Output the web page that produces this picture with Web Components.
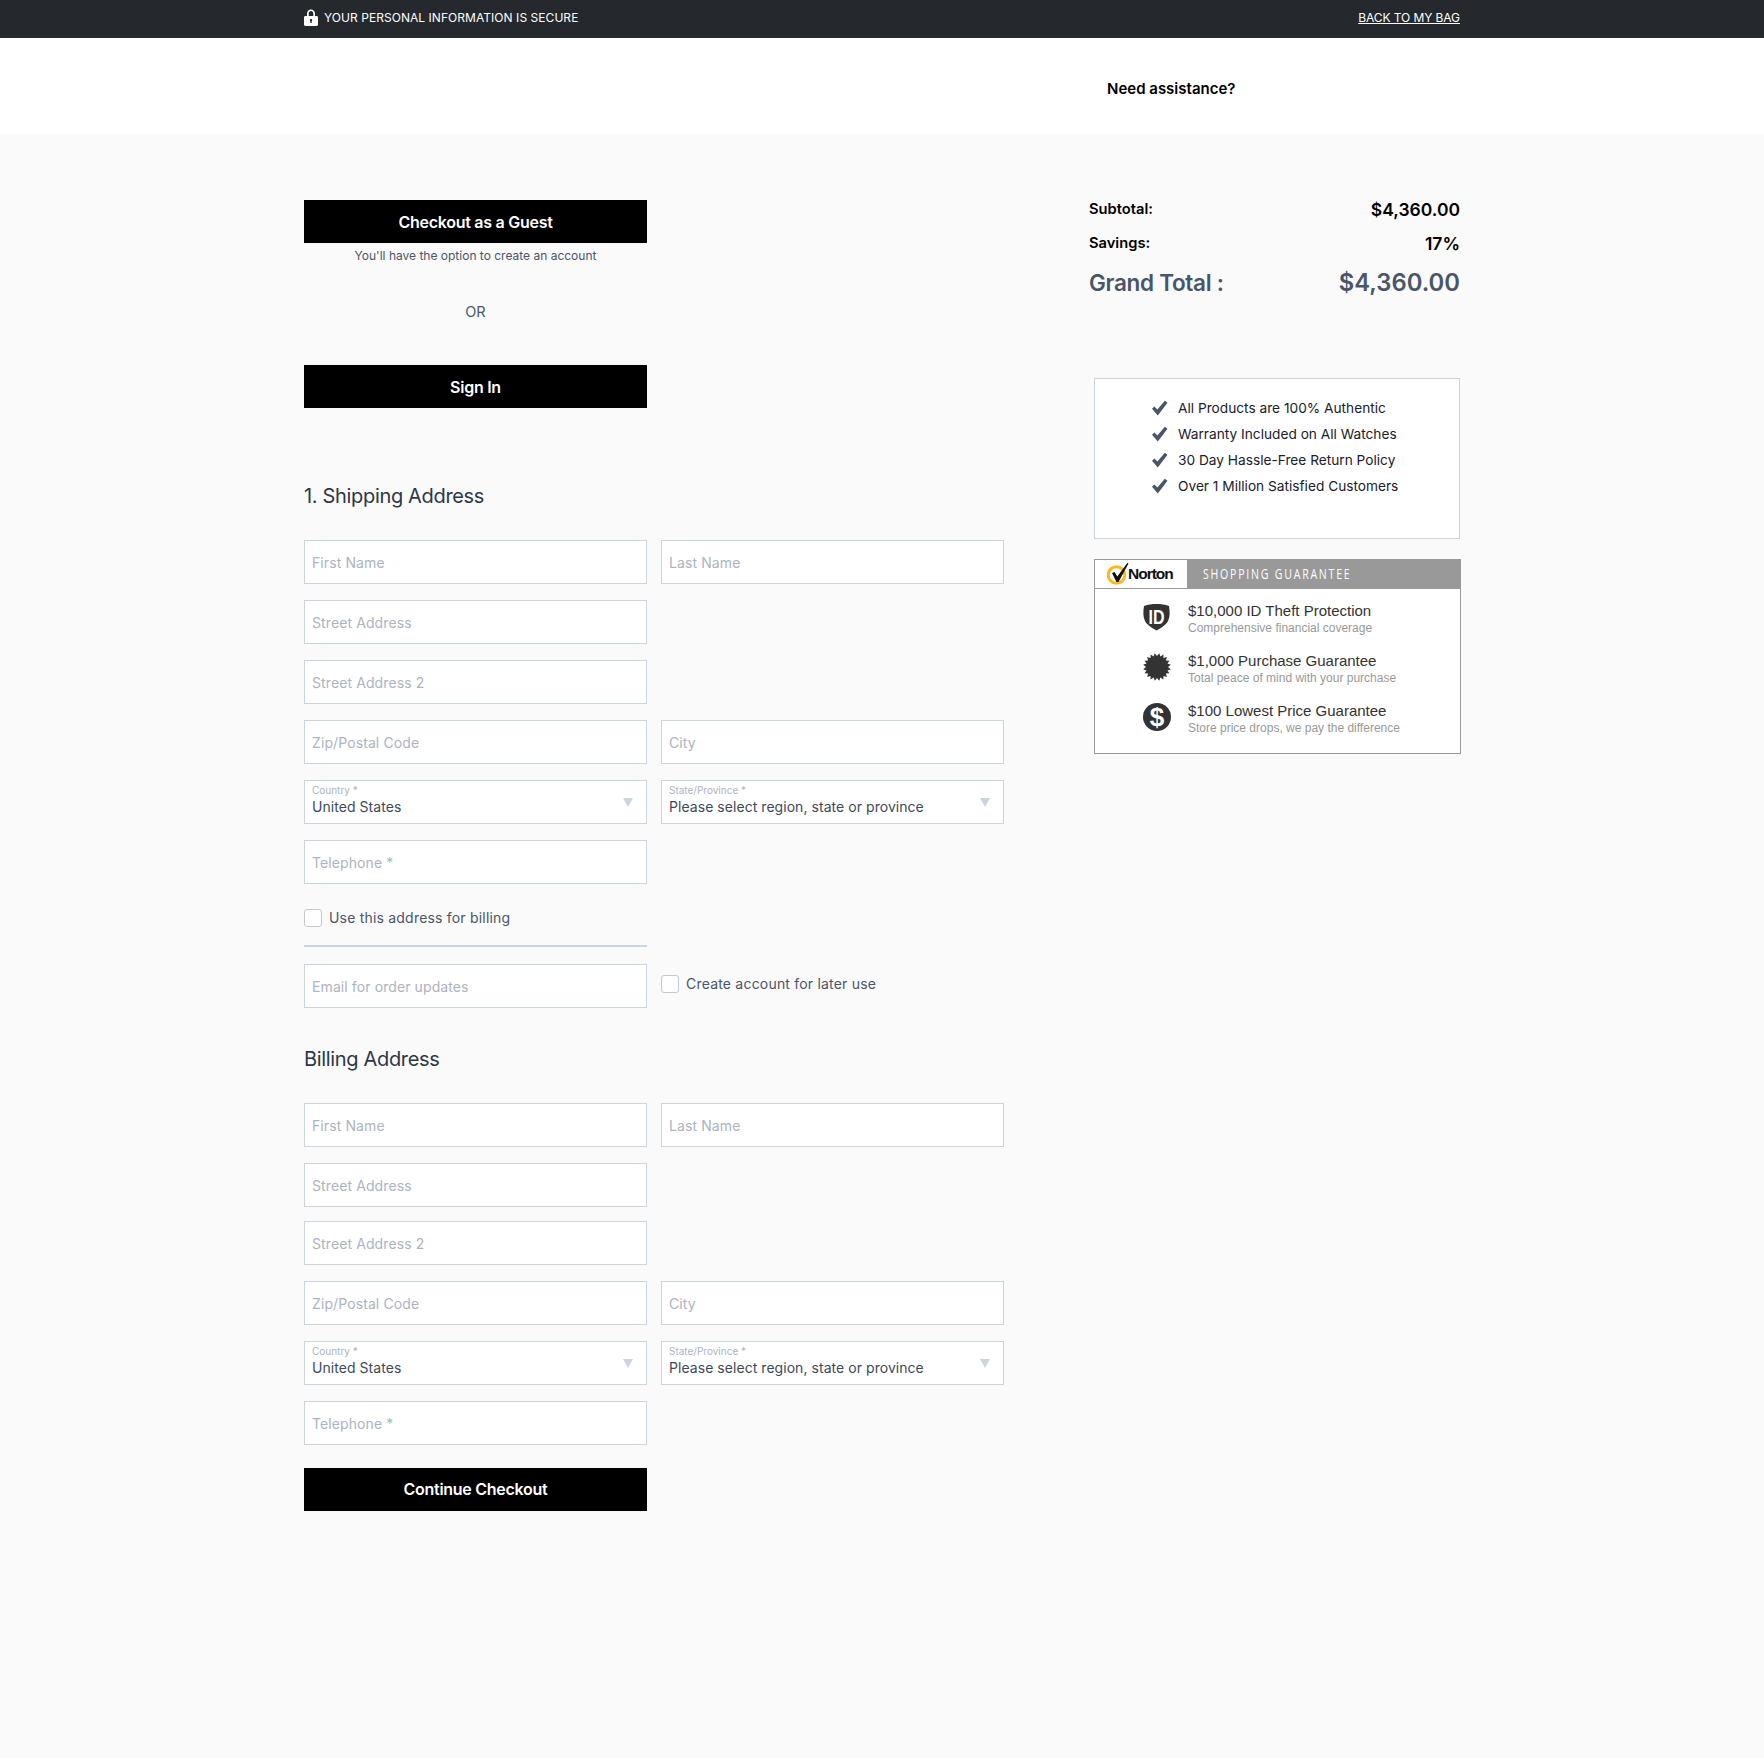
<!DOCTYPE html>
<html lang="en">
<head>
<meta charset="utf-8">
<title>Secure Checkout</title>
<style>
html, body { margin: 0; padding: 0; }
body { background: #fafafa; font-family: Inter, "Liberation Sans", sans-serif; color: #2d3748; min-height: 1758px; }
</style>
</head>
<body>
<secure-bar></secure-bar>
<site-header></site-header>
<checkout-page>
  <div slot="left">
    <guest-options></guest-options>
    <address-form heading="1. Shipping Address" shipping></address-form>
    <address-form heading="Billing Address"></address-form>
    <ck-button top="23" class="last">Continue Checkout</ck-button>
  </div>
  <div slot="right">
    <order-summary></order-summary>
    <trust-list></trust-list>
    <norton-card></norton-card>
  </div>
</checkout-page>

<script>
class secureBar extends HTMLElement {
    constructor() {
        super();
        this.attachShadow({ mode: 'open' });
    }

    connectedCallback() {
        this.shadowRoot.innerHTML = `
            <style>
            :host { display: block; background: #25282d; color: #fff; height: 38px; }
            .wrap { width: 1156px; height: 35px; margin: 0 auto; display: flex; align-items: center; justify-content: space-between; font-size: 12px; }
            .left { display: flex; align-items: center; gap: 6px; letter-spacing: 0.05px; }
            svg { display: block; width: 14px; height: 17px; margin-top: -1px; }
            a { color: #fff; text-decoration: underline; letter-spacing: -0.08px; }
            </style>
            <div class="wrap">
                <div class="left">
                    <svg viewBox="0 0 14 17"><path fill="#fff" d="M3 7V4.600C3 2.200 4.800.4 7 .4s4 1.800 4 4.200V7h1.600c.8 0 1.400.6 1.400 1.400v7.200c0 .8-.6 1.400-1.400 1.400H1.400C.6 17 0 16.400 0 15.600V8.400C0 7.600.6 7 1.400 7H3zm1.700 0h4.600V4.600C9.300 3.200 8.300 2.100 7 2.100S4.700 3.200 4.700 4.600V7zM7 10c-.7 0-1.200.5-1.200 1.200 0 .4.200.8.500 1v1.800h1.400v-1.800c.3-.2.500-.6.500-1C8.200 10.500 7.700 10 7 10z"/></svg>
                    <span>YOUR PERSONAL INFORMATION IS SECURE</span>
                </div>
                <a href="#">BACK TO MY BAG</a>
            </div>
        `;
    }
}
customElements.define("secure-bar", secureBar);

class siteHeader extends HTMLElement {
    constructor() {
        super();
        this.attachShadow({ mode: 'open' });
    }

    connectedCallback() {
        this.shadowRoot.innerHTML = `
            <style>
            :host { display: block; background: #fff; height: 96px; }
            .wrap { width: 1156px; margin: 0 auto; padding: 41px 0 0 803px; box-sizing: border-box; }
            b { font-size: 15px; font-weight: 600; color: #000; line-height: 19px; display: block; }
            </style>
            <div class="wrap"><b>Need assistance?</b></div>
        `;
    }
}
customElements.define("site-header", siteHeader);

class checkoutPage extends HTMLElement {
    constructor() {
        super();
        this.attachShadow({ mode: 'open' });
    }

    connectedCallback() {
        this.shadowRoot.innerHTML = `
            <style>
            :host { display: block; }
            .wrap { width: 1156px; margin: 0 auto; padding-top: 66px; display: flex; justify-content: space-between; align-items: flex-start; }
            .left { width: 700px; }
            .right { width: 371px; }
            </style>
            <div class="wrap">
                <div class="left"><slot name="left"></slot></div>
                <div class="right"><slot name="right"></slot></div>
            </div>
        `;
    }
}
customElements.define("checkout-page", checkoutPage);

class ckButton extends HTMLElement {
    constructor() {
        super();
        this.attachShadow({ mode: 'open' });
    }

    connectedCallback() {
        this.shadowRoot.innerHTML = `
            <style>
            :host { display: block; width: 343px; margin-top: ${this.getAttribute('top') || 0}px; }
            :host(.last) button { padding-bottom: 2px; }
            button { display: block; width: 100%; height: 43px; border: 0; padding: 0; background: #000; color: #fff; font: 600 16px Inter, sans-serif; letter-spacing: -0.27px; cursor: pointer; }
            </style>
            <button><slot></slot></button>
        `;
    }
}
customElements.define("ck-button", ckButton);

class guestOptions extends HTMLElement {
    constructor() {
        super();
        this.attachShadow({ mode: 'open' });
    }

    connectedCallback() {
        this.shadowRoot.innerHTML = `
            <style>
            :host { display: block; width: 343px; color: #4a5568; text-align: center; }
            .note { font-size: 12px; line-height: 16px; margin-top: 5px; }
            .or { font-size: 14.5px; line-height: 20px; margin-top: 38px; margin-bottom: 43px; }
            </style>
            <ck-button>Checkout as a Guest</ck-button>
            <div class="note">You'll have the option to create an account</div>
            <div class="or">OR</div>
            <ck-button>Sign In</ck-button>
        `;
    }
}
customElements.define("guest-options", guestOptions);

class ckField extends HTMLElement {
    constructor() {
        super();
        this.attachShadow({ mode: 'open' });
    }

    connectedCallback() {
        this.shadowRoot.innerHTML = `
            <style>
            :host { display: block; position: relative; height: 44px; }
            input { display: block; width: 100%; height: 100%; box-sizing: border-box; border: 1px solid #cbd5e0; border-radius: 0; background: #fff; padding: 2px 8px 0; font: 14px Inter, sans-serif; color: #4a5568; outline: 0; }
            label { position: absolute; left: 8px; top: 13px; font-size: 14px; letter-spacing: 0.1px; line-height: 20px; color: #adb3bf; pointer-events: none; }
            input:not(:placeholder-shown) + label { display: none; }
            </style>
            <input placeholder=" " aria-label="${this.textContent.trim()}">
            <label><slot></slot></label>
        `;
    }
}
customElements.define("ck-field", ckField);

class ckSelect extends HTMLElement {
    constructor() {
        super();
        this.attachShadow({ mode: 'open' });
    }

    connectedCallback() {
        this.shadowRoot.innerHTML = `
            <style>
            :host { display: block; height: 44px; box-sizing: border-box; border: 1px solid #cbd5e0; background: #fff; padding: 3px 7px 0; position: relative; cursor: pointer; }
            .cap { font-size: 10px; line-height: 12px; color: #adb3bf; }
            .val { font-size: 14px; line-height: 20px; letter-spacing: 0.05px; color: #3f4958; margin-top: 1px; }
            i { position: absolute; right: 13px; top: 17px; width: 0; height: 0; border: 5px solid transparent; border-top: 9px solid #cbd5e0; border-bottom: 0; }
            </style>
            <div class="cap">${this.getAttribute('label')}</div>
            <div class="val"><slot></slot></div>
            <i></i>
        `;
    }
}
customElements.define("ck-select", ckSelect);

class ckCheck extends HTMLElement {
    constructor() {
        super();
        this.attachShadow({ mode: 'open' });
    }

    connectedCallback() {
        this.shadowRoot.innerHTML = `
            <style>
            :host { display: block; }
            label { display: flex; align-items: center; gap: 7px; font-size: 14px; line-height: 20px; color: #4a5568; letter-spacing: 0.2px; cursor: pointer; }
            input { appearance: none; display: block; margin: 0; width: 18px; height: 18px; box-sizing: border-box; border: 1px solid #c4c8ce; border-radius: 3px; background: #fff; }
            input:checked { background: #4a5568; }
            </style>
            <label><input type="checkbox"><span><slot></slot></span></label>
        `;
    }
}
customElements.define("ck-check", ckCheck);

class addressForm extends HTMLElement {
    constructor() {
        super();
        this.attachShadow({ mode: 'open' });
    }

    connectedCallback() {
        const shipping = this.hasAttribute('shipping');
        this.shadowRoot.innerHTML = `
            <style>
            :host { display: block; margin-top: ${shipping ? 72 : 35}px; }
            h2 { margin: 0 0 28px; font-size: 20px; font-weight: 400; line-height: 32px; letter-spacing: -0.33px; color: #2d3748; }
            .grid { display: grid; grid-template-columns: 343px 343px; column-gap: 14px; row-gap: 16px; }
            .first { grid-column: 1; }
            .tight { margin-top: ${shipping ? 0 : -2}px; }
            hr { grid-column: 1; height: 2px; border: 0; margin: 1px 0; background: #cbd5e0; }
            .billing { grid-column: 1; margin-top: 8px; }
            .acct { align-self: center; margin-top: -4px; }
            </style>
            <h2>${this.getAttribute('heading')}</h2>
            <div class="grid">
                <ck-field>First Name</ck-field>
                <ck-field>Last Name</ck-field>
                <ck-field class="first">Street Address</ck-field>
                <ck-field class="first tight">Street Address 2</ck-field>
                <ck-field class="first">Zip/Postal Code</ck-field>
                <ck-field>City</ck-field>
                <ck-select label="Country *">United States</ck-select>
                <ck-select label="State/Province *">Please select region, state or province</ck-select>
                <ck-field class="first">Telephone *</ck-field>
                ${shipping ? `
                <ck-check class="billing">Use this address for billing</ck-check>
                <hr>
                <ck-field class="first">Email for order updates</ck-field>
                <ck-check class="acct">Create account for later use</ck-check>
                ` : ''}
            </div>
        `;
    }
}
customElements.define("address-form", addressForm);

class orderSummary extends HTMLElement {
    constructor() {
        super();
        this.attachShadow({ mode: 'open' });
    }

    connectedCallback() {
        this.shadowRoot.innerHTML = `
            <style>
            :host { display: block; color: #000; }
            .row { display: flex; justify-content: space-between; align-items: center; }
            .lbl { font-size: 14.7px; font-weight: 600; line-height: 20px; margin-top: -2px; }
            .amt { font-size: 17.5px; font-weight: 600; line-height: 20px; }
            .row + .row { margin-top: 14px; }
            .grand { color: #4a5568; font-weight: 600; line-height: 32px; }
            .row.grand { margin-top: 13px; }
            .grand .name { font-size: 22.5px; letter-spacing: -0.3px; }
            .grand .sum { font-size: 23.8px; }
            </style>
            <div class="row"><span class="lbl">Subtotal:</span><span class="amt">$4,360.00</span></div>
            <div class="row"><span class="lbl">Savings:</span><span class="amt">17%</span></div>
            <div class="row grand"><span class="name">Grand Total :</span><span class="sum">$4,360.00</span></div>
        `;
    }
}
customElements.define("order-summary", orderSummary);

class trustList extends HTMLElement {
    constructor() {
        super();
        this.attachShadow({ mode: 'open' });
    }

    connectedCallback() {
        const items = [
            "All Products are 100% Authentic",
            "Warranty Included on All Watches",
            "30 Day Hassle-Free Return Policy",
            "Over 1 Million Satisfied Customers"
        ];
        this.shadowRoot.innerHTML = `
            <style>
            :host { display: block; box-sizing: border-box; width: 366px; height: 161px; margin: 79px 0 0 5px; border: 1px solid #cbd5e0; background: #fff; padding: 16px 0 0 56px; }
            ul { list-style: none; margin: 0; padding: 0; }
            li { display: flex; align-items: center; gap: 10px; height: 26px; font-size: 13.7px; color: #1a202c; }
            svg { display: block; width: 17px; height: 16px; flex: none; }
            </style>
            <ul>
                ${items.map(t => `<li><svg viewBox="0 0 17 16"><path fill="#4a5568" d="M1 8.800l2.400-2.300 3 3L13.800.8 16.500 2.800 6.800 15.500z"/></svg><span>${t}</span></li>`).join('')}
            </ul>
        `;
    }
}
customElements.define("trust-list", trustList);

class nortonCard extends HTMLElement {
    constructor() {
        super();
        this.attachShadow({ mode: 'open' });
    }

    connectedCallback() {
        const burst = [];
        for (let i = 0; i < 40; i++) {
            const r = i % 2 ? 14 : 11;
            const a = i * Math.PI / 20;
            burst.push((14 + r * Math.cos(a)).toFixed(2) + ',' + (14 + r * Math.sin(a)).toFixed(2));
        }
        this.shadowRoot.innerHTML = `
            <style>
            :host { display: block; box-sizing: border-box; width: 367px; height: 195px; margin: 20px 0 0 5px; border: 1px solid #999; background: #fff; font-family: "Liberation Sans", Arial, sans-serif; }
            .head { display: flex; height: 28px; border-bottom: 1px solid #999; }
            .logo { width: 92px; display: flex; align-items: center; padding-left: 12px; box-sizing: border-box; font: 700 15.500px "Liberation Sans", sans-serif; letter-spacing: -1px; color: #111; }
            .logo svg { display: block; width: 22px; height: 23px; margin: -2px -1px 0 0; }
            .band { flex: 1; background: #999; color: #fff; padding-left: 16px; overflow: hidden; }
            .band span { display: inline-block; font: 15px/27px "Open Sans", sans-serif; letter-spacing: 2.500px; transform: scaleX(0.705); transform-origin: left; white-space: nowrap; }
            .rows { padding-top: 4px; }
            .row { display: flex; align-items: center; height: 50px; padding-left: 48px; }
            .row svg { display: block; width: 28px; height: 28px; flex: none; margin: -2px 17px 0 0; }
            .txt { margin-top: 4px; }
            .t { font-size: 15px; line-height: 17px; color: #333; }
            .s { font-size: 12px; line-height: 19px; color: #999; }
            </style>
            <div class="head">
                <div class="logo">
                    <svg viewBox="0 0 22 23"><circle cx="9.500" cy="13" r="8.300" fill="none" stroke="#fdb827" stroke-width="3"/><path fill="#111" d="M5 11l2.500-1 2.800 4.500L20.500.8l1 .7L11.500 20h-2z"/></svg>
                    <span>Norton</span>
                </div>
                <div class="band"><span>SHOPPING GUARANTEE</span></div>
            </div>
            <div class="rows">
                <div class="row">
                    <svg viewBox="0 0 28 28"><path fill="#333" d="M1 3C5 1.500 9 1 13.500 1S22 1.500 26 3c1 6 1 11-1 15-2 4-7 7-11.500 9.500C9 25 4 22 2 18 0 14 0 9 1 3z"/><text x="13.500" y="21" text-anchor="middle" fill="#fff" font-family="Liberation Sans" font-weight="700" font-size="21" textLength="16" lengthAdjust="spacingAndGlyphs">ID</text></svg>
                    <div class="txt"><div class="t">$10,000 ID Theft Protection</div><div class="s">Comprehensive financial coverage</div></div>
                </div>
                <div class="row">
                    <svg viewBox="0 0 28 28"><polygon fill="#333" points="${burst.join(' ')}"/></svg>
                    <div class="txt"><div class="t">$1,000 Purchase Guarantee</div><div class="s">Total peace of mind with your purchase</div></div>
                </div>
                <div class="row">
                    <svg viewBox="0 0 28 28"><circle cx="14" cy="14" r="14" fill="#333"/><text x="14" y="23" text-anchor="middle" fill="#fff" font-family="Liberation Sans" font-weight="700" font-size="26">$</text></svg>
                    <div class="txt"><div class="t">$100 Lowest Price Guarantee</div><div class="s">Store price drops, we pay the difference</div></div>
                </div>
            </div>
        `;
    }
}
customElements.define("norton-card", nortonCard);
</script>
</body>
</html>
